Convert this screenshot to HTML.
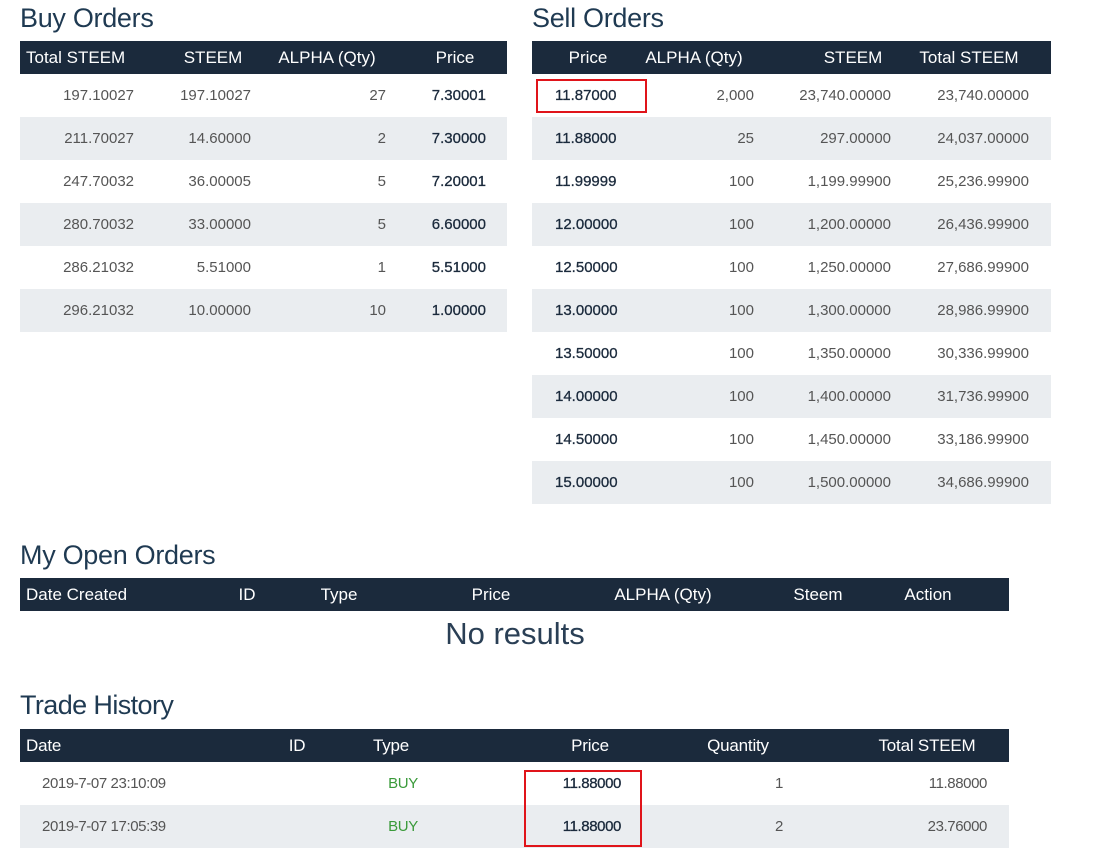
<!DOCTYPE html>
<html><head><meta charset="utf-8"><style>
body{margin:0;width:1110px;height:858px;background:#fff;font-family:"Liberation Sans","DejaVu Sans",sans-serif;position:relative;overflow:hidden}
.t{position:absolute;font-size:27px;color:#1f3a52;letter-spacing:-0.3px}
.hd{position:absolute;height:33px;background:#1b2a3c;color:#fff;font-size:17px;line-height:34px}
.row{position:absolute;height:43px;line-height:44px;font-size:15px;color:#555}
.alt{background:#eaedf0}
.c{position:absolute;white-space:nowrap}
.r{text-align:right;width:160px}
.m{text-align:center;width:200px}
.b{color:#1b2a3c;-webkit-text-stroke:0.3px #1b2a3c}
.box{position:absolute;border:2px solid #e0141a;box-sizing:border-box}
</style></head><body>

<div class="t" style="left:20px;top:3px">Buy Orders</div>
<div class="hd" style="left:20px;top:41px;width:487px">
<span class="c" style="left:6px">Total STEEM</span>
<span class="c m" style="left:93px">STEEM</span>
<span class="c m" style="left:207px">ALPHA (Qty)</span>
<span class="c m" style="left:335px">Price</span>
</div>

<div class="t" style="left:532px;top:3px">Sell Orders</div>
<div class="hd" style="left:532px;top:41px;width:519px">
<span class="c m" style="left:-44px">Price</span>
<span class="c m" style="left:62px">ALPHA (Qty)</span>
<span class="c m" style="left:221px">STEEM</span>
<span class="c m" style="left:337px">Total STEEM</span>
</div>

<div class="row" style="left:20px;top:74px;width:487px"><span class="c r" style="left:-46px">197.10027</span><span class="c r" style="left:71px">197.10027</span><span class="c r" style="left:206px">27</span><span class="c r b" style="left:306px">7.30001</span></div>
<div class="row alt" style="left:20px;top:117px;width:487px"><span class="c r" style="left:-46px">211.70027</span><span class="c r" style="left:71px">14.60000</span><span class="c r" style="left:206px">2</span><span class="c r b" style="left:306px">7.30000</span></div>
<div class="row" style="left:20px;top:160px;width:487px"><span class="c r" style="left:-46px">247.70032</span><span class="c r" style="left:71px">36.00005</span><span class="c r" style="left:206px">5</span><span class="c r b" style="left:306px">7.20001</span></div>
<div class="row alt" style="left:20px;top:203px;width:487px"><span class="c r" style="left:-46px">280.70032</span><span class="c r" style="left:71px">33.00000</span><span class="c r" style="left:206px">5</span><span class="c r b" style="left:306px">6.60000</span></div>
<div class="row" style="left:20px;top:246px;width:487px"><span class="c r" style="left:-46px">286.21032</span><span class="c r" style="left:71px">5.51000</span><span class="c r" style="left:206px">1</span><span class="c r b" style="left:306px">5.51000</span></div>
<div class="row alt" style="left:20px;top:289px;width:487px"><span class="c r" style="left:-46px">296.21032</span><span class="c r" style="left:71px">10.00000</span><span class="c r" style="left:206px">10</span><span class="c r b" style="left:306px">1.00000</span></div>

<div class="row" style="left:532px;top:74px;width:519px"><span class="c b" style="left:23px">11.87000</span><span class="c r" style="left:62px">2,000</span><span class="c r" style="left:199px">23,740.00000</span><span class="c r" style="left:337px">23,740.00000</span></div>
<div class="row alt" style="left:532px;top:117px;width:519px"><span class="c b" style="left:23px">11.88000</span><span class="c r" style="left:62px">25</span><span class="c r" style="left:199px">297.00000</span><span class="c r" style="left:337px">24,037.00000</span></div>
<div class="row" style="left:532px;top:160px;width:519px"><span class="c b" style="left:23px">11.99999</span><span class="c r" style="left:62px">100</span><span class="c r" style="left:199px">1,199.99900</span><span class="c r" style="left:337px">25,236.99900</span></div>
<div class="row alt" style="left:532px;top:203px;width:519px"><span class="c b" style="left:23px">12.00000</span><span class="c r" style="left:62px">100</span><span class="c r" style="left:199px">1,200.00000</span><span class="c r" style="left:337px">26,436.99900</span></div>
<div class="row" style="left:532px;top:246px;width:519px"><span class="c b" style="left:23px">12.50000</span><span class="c r" style="left:62px">100</span><span class="c r" style="left:199px">1,250.00000</span><span class="c r" style="left:337px">27,686.99900</span></div>
<div class="row alt" style="left:532px;top:289px;width:519px"><span class="c b" style="left:23px">13.00000</span><span class="c r" style="left:62px">100</span><span class="c r" style="left:199px">1,300.00000</span><span class="c r" style="left:337px">28,986.99900</span></div>
<div class="row" style="left:532px;top:332px;width:519px"><span class="c b" style="left:23px">13.50000</span><span class="c r" style="left:62px">100</span><span class="c r" style="left:199px">1,350.00000</span><span class="c r" style="left:337px">30,336.99900</span></div>
<div class="row alt" style="left:532px;top:375px;width:519px"><span class="c b" style="left:23px">14.00000</span><span class="c r" style="left:62px">100</span><span class="c r" style="left:199px">1,400.00000</span><span class="c r" style="left:337px">31,736.99900</span></div>
<div class="row" style="left:532px;top:418px;width:519px"><span class="c b" style="left:23px">14.50000</span><span class="c r" style="left:62px">100</span><span class="c r" style="left:199px">1,450.00000</span><span class="c r" style="left:337px">33,186.99900</span></div>
<div class="row alt" style="left:532px;top:461px;width:519px"><span class="c b" style="left:23px">15.00000</span><span class="c r" style="left:62px">100</span><span class="c r" style="left:199px">1,500.00000</span><span class="c r" style="left:337px">34,686.99900</span></div>
<div class="box" style="left:536px;top:79px;width:111px;height:34px"></div>

<div class="t" style="left:20px;top:540px">My Open Orders</div>
<div class="hd" style="left:20px;top:578px;width:989px">
<span class="c" style="left:6px">Date Created</span>
<span class="c m" style="left:127px">ID</span>
<span class="c m" style="left:219px">Type</span>
<span class="c m" style="left:371px">Price</span>
<span class="c m" style="left:543px">ALPHA (Qty)</span>
<span class="c m" style="left:698px">Steem</span>
<span class="c m" style="left:808px">Action</span>
</div>
<div style="position:absolute;left:315px;width:400px;text-align:center;top:616px;font-size:31px;color:#2a3f55">No results</div>

<div class="t" style="left:20px;top:690px;letter-spacing:-0.6px">Trade History</div>
<div class="hd" style="left:20px;top:729px;width:989px;letter-spacing:-0.2px">
<span class="c" style="left:6px">Date</span>
<span class="c m" style="left:177px">ID</span>
<span class="c m" style="left:271px">Type</span>
<span class="c m" style="left:470px">Price</span>
<span class="c m" style="left:618px">Quantity</span>
<span class="c m" style="left:807px">Total STEEM</span>
</div>
<div class="row" style="left:20px;top:762px;width:989px;letter-spacing:-0.4px"><span class="c" style="left:22px">2019-7-07 23:10:09</span><span class="c m" style="left:283px;color:#3a9a3a">BUY</span><span class="c r b" style="left:441px">11.88000</span><span class="c r" style="left:603px">1</span><span class="c r" style="left:807px">11.88000</span></div>
<div class="row alt" style="left:20px;top:805px;width:989px;letter-spacing:-0.4px"><span class="c" style="left:22px">2019-7-07 17:05:39</span><span class="c m" style="left:283px;color:#3a9a3a">BUY</span><span class="c r b" style="left:441px">11.88000</span><span class="c r" style="left:603px">2</span><span class="c r" style="left:807px">23.76000</span></div>
<div class="box" style="left:524px;top:770px;width:118px;height:77px"></div>
</body></html>
